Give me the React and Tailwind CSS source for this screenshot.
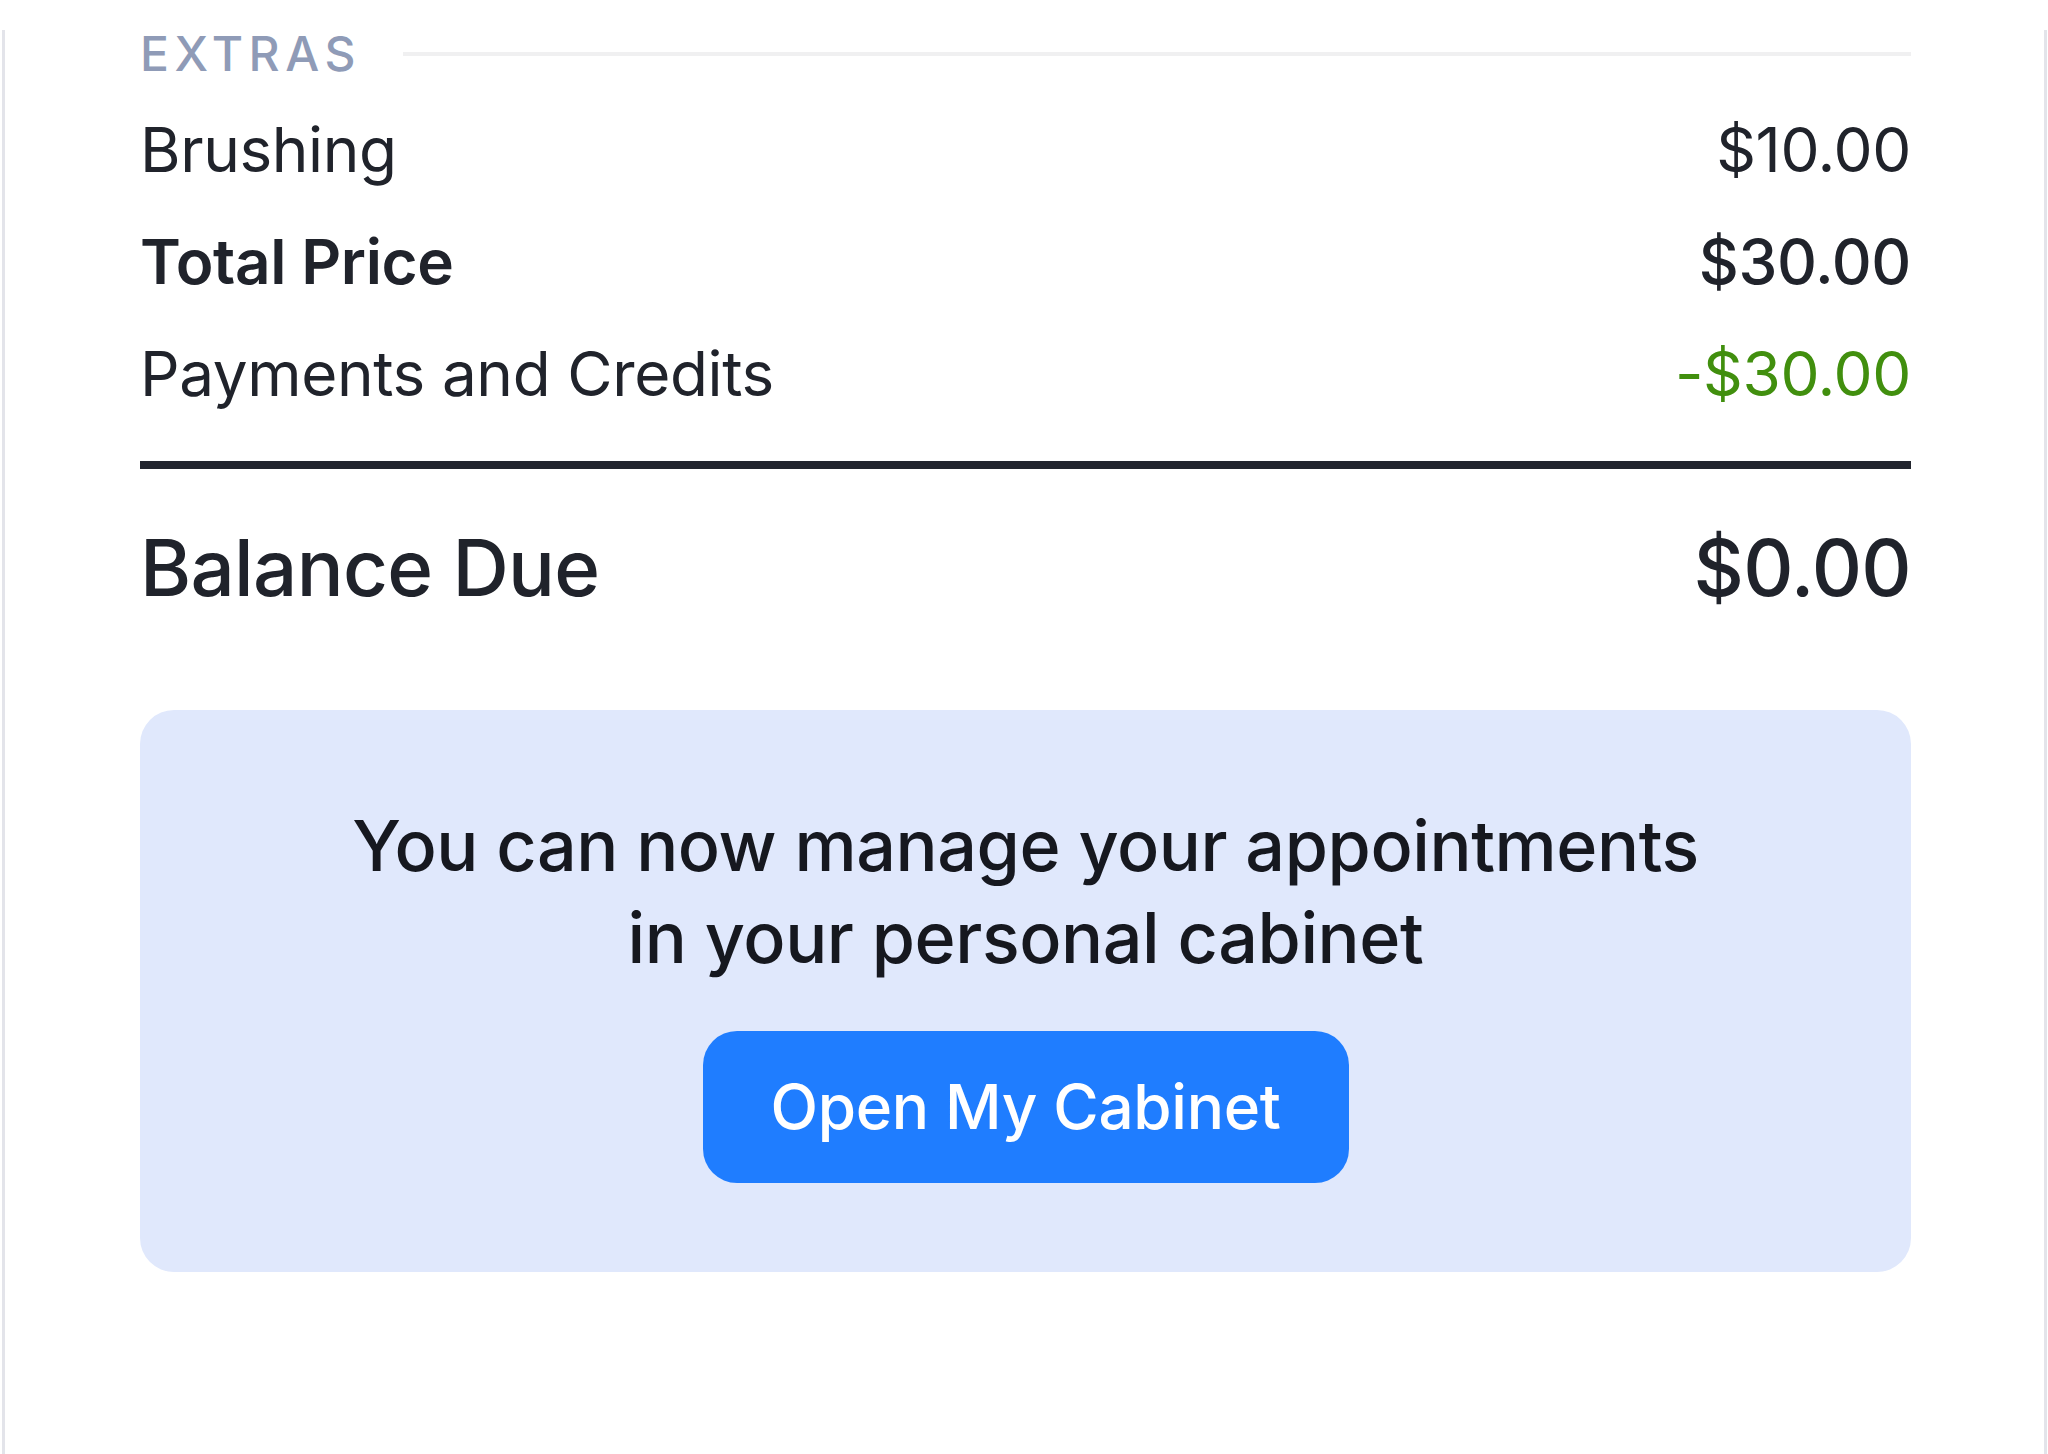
function Row({ label, amount, labelClass = "", amountClass = "" }) {
    return (
        <div className="flex justify-between items-baseline text-[62px] leading-[112px] tracking-[-0.006em]">
            <span className={labelClass}>{ label }</span>
            <span className={amountClass}>{ amount }</span>
        </div>
    )
}

export default function App() {
    return (
        <div className="w-[2048px] h-[1454px] bg-white" style={{ fontFamily: "Inter, 'Noto Sans', sans-serif" }}>
            <div className="ml-[2px] w-[2045px] h-[1453px] border-x-[3px] border-b-[3px] border-[#e3e4ea] pl-[135px] pr-[133px] text-[#20232b]">
                <header className="flex items-center mt-[30px] mb-[16px]">
                    <h3 className="text-[48px] leading-[48px] font-medium tracking-[0.115em] text-[#8f9bb7]">EXTRAS</h3>
                    <div className="flex-1 h-[4px] bg-[#f0f0f1] ml-[42px]" />
                </header>
                <section>
                    <Row label="Brushing" amount="$10.00" />
                    <Row label="Total Price" amount="$30.00" labelClass="font-semibold" amountClass="font-medium" />
                    <Row label="Payments and Credits" amount="-$30.00" amountClass="text-[#418f0e]" />
                </section>
                <div className="h-[8px] bg-[#22252e] mt-[31px]" />
                <div className="flex justify-between items-baseline mt-[52px] text-[78px] leading-[94px] font-medium tracking-[-0.009em]">
                    <span>Balance Due</span>
                    <span>$0.00</span>
                </div>
                <div className="mt-[95px] rounded-[34px] bg-[#e0e8fc] pt-[90px] pb-[89px] flex flex-col items-center">
                    <p className="text-center text-[70px] leading-[92px] font-medium tracking-[-0.006em] text-[#16181f]">
                        You can now manage your appointments<br />in your personal cabinet
                    </p>
                    <button className="mt-[47px] h-[152px] w-[646px] rounded-[34px] bg-[#1f7dff] text-white text-[62px] leading-[62px] font-medium tracking-[-0.005em] flex items-center justify-center">
                        Open My Cabinet
                    </button>
                </div>
            </div>
        </div>
    )
}
